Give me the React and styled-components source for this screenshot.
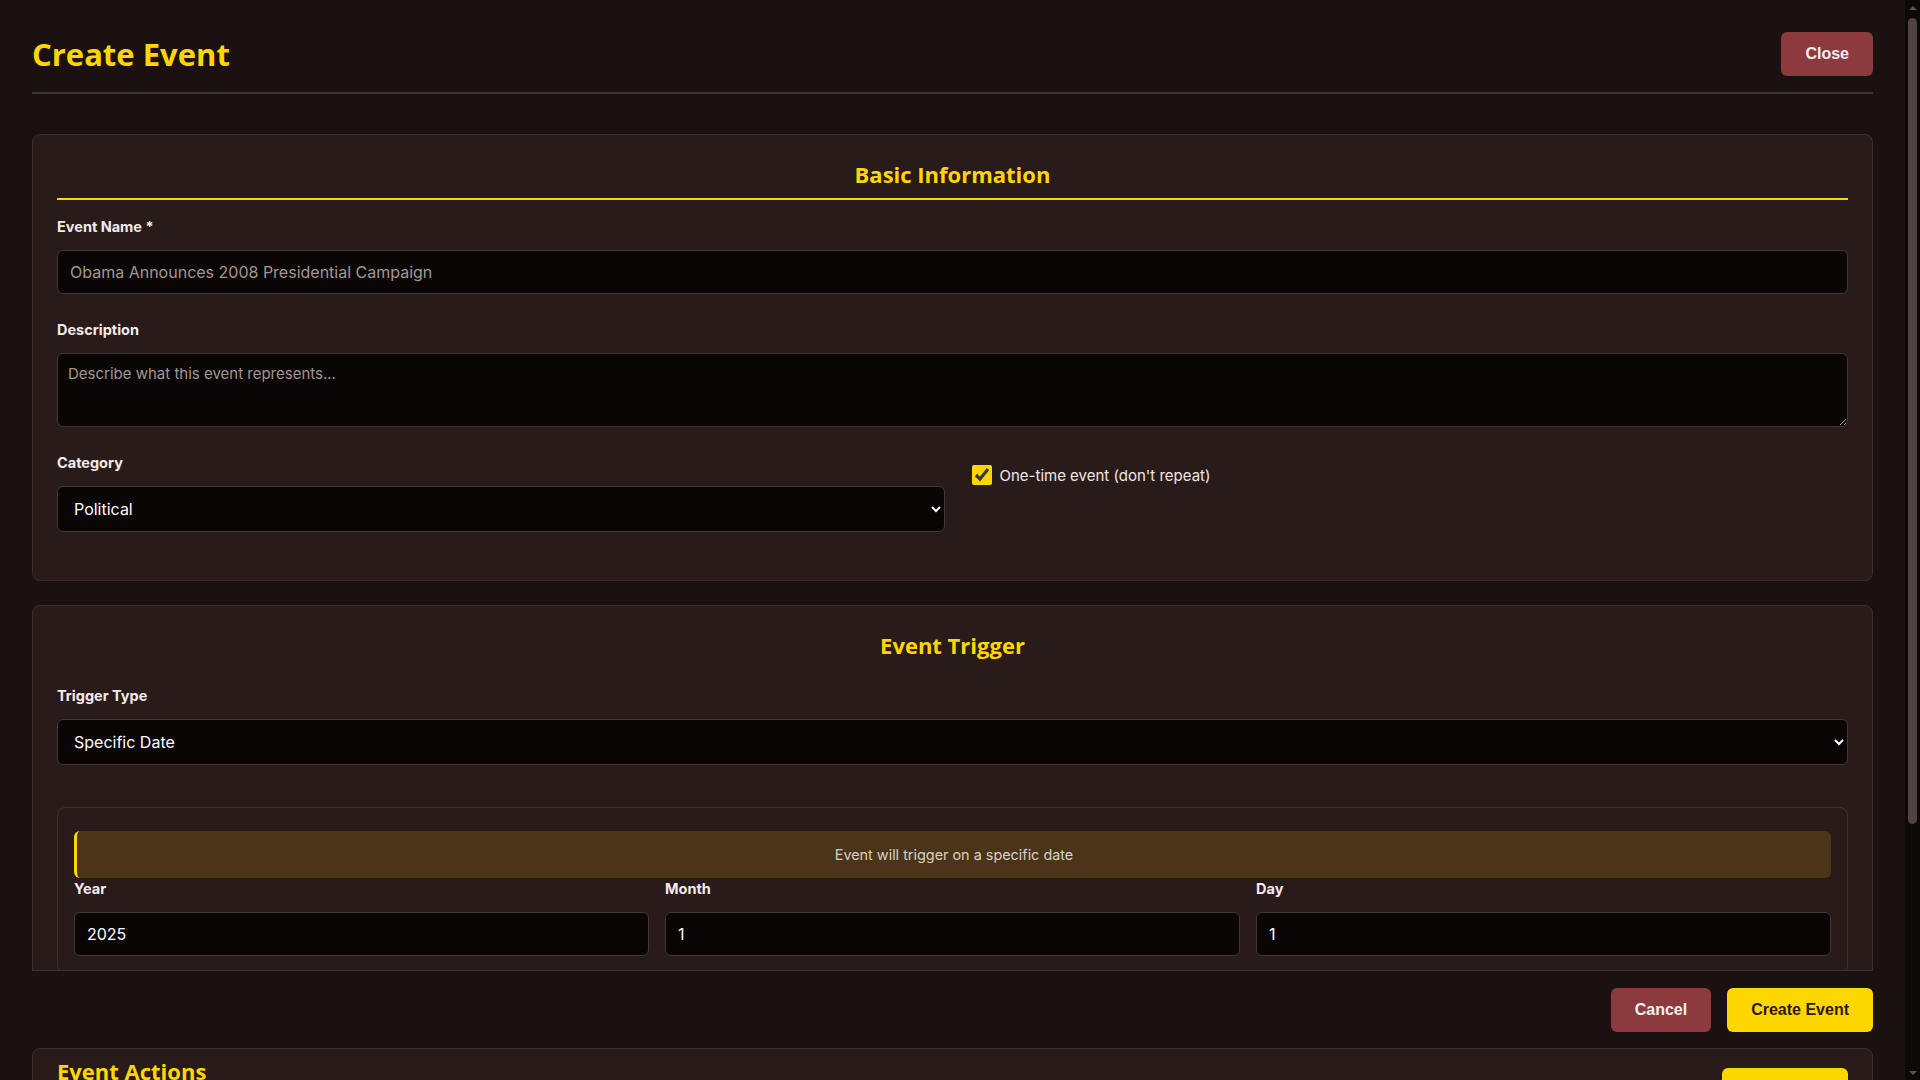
import React from "react";
import styled, { createGlobalStyle } from "styled-components";

const GlobalStyle = createGlobalStyle`
  html {
    background: #1a1110;
    color-scheme: dark;
  }
  body {
    margin: 0;
    background: #1a1110;
    color: #f0e6e6;
    font-family: Inter, "Noto Sans", sans-serif;
  }
  * { box-sizing: border-box; }
`;

const Shell = styled.div`
  display: flex;
  align-items: flex-start;
`;

const Page = styled.div`
  flex: 1;
  min-width: 0;
  padding: 32px;
`;

/* decorative page scrollbar, as in the screenshot */
const Rail = styled.div`
  position: sticky;
  top: 0;
  width: 15px;
  height: 100vh;
  flex-shrink: 0;
  background: #0d0909;
  display: flex;
  flex-direction: column;
  align-items: center;
`;

const RailArrow = styled.div`
  height: 15px;
  width: 15px;
  display: flex;
  align-items: center;
  justify-content: center;
  &::before {
    content: "";
    border-left: 4px solid transparent;
    border-right: 4px solid transparent;
    ${(p) =>
      p.$down
        ? "border-top: 4px solid #5e5151;"
        : "border-bottom: 4px solid #5e5151;"}
  }
`;

const RailTrack = styled.div`
  flex: 1;
  width: 100%;
  display: flex;
  justify-content: center;
  padding-top: 3px;
`;

const RailThumb = styled.div`
  width: 9px;
  height: 806px;
  border-radius: 5px;
  background: #4f4343;
`;

const Header = styled.header`
  display: flex;
  justify-content: space-between;
  align-items: center;
  padding-bottom: 16px;
  border-bottom: 2px solid #3f3434;
  margin-bottom: 40px;
`;

const PageTitle = styled.h1`
  margin: 0;
  font-family: "Open Sans", Lato, sans-serif;
  font-weight: 700;
  font-size: 31px;
  line-height: 40px;
  color: #ffd700;
`;

const Button = styled.button`
  height: 44px;
  padding: 0 ${(p) => p.$pad || 24}px;
  border: none;
  border-radius: 6px;
  font-family: "Liberation Sans", Arial, sans-serif;
  font-weight: 700;
  font-size: 16px;
  cursor: pointer;
  background: ${(p) => (p.$variant === "primary" ? "#ffd700" : "#8b3a3e")};
  color: ${(p) => (p.$variant === "primary" ? "#2a1a1a" : "#f6eeee")};
`;

const ScrollArea = styled.div`
  height: 836px;
  overflow: hidden;
`;

const Card = styled.section`
  background: #2a1b1b;
  border: 1px solid #3d2f2f;
  border-radius: 8px;
  padding: 25px 24px 24px;
  margin-bottom: 24px;
`;

const SectionTitle = styled.h3`
  margin: 0 0 18px;
  padding-bottom: 10px;
  text-align: center;
  font-family: "Open Sans", Lato, sans-serif;
  font-weight: 700;
  font-size: 22px;
  line-height: 28px;
  color: #ffd700;
  border-bottom: ${(p) => (p.$underline ? "2px solid #ffd700" : "none")};
`;

const FormGroup = styled.div`
  margin-bottom: ${(p) => (p.$mb !== undefined ? p.$mb : 27)}px;
`;

const Label = styled.label`
  display: block;
  font-size: 14.5px;
  line-height: 17px;
  font-weight: 700;
  color: #f3ebeb;
  margin-bottom: 15px;
`;

const TextInput = styled.input`
  display: block;
  width: 100%;
  height: 44px;
  padding: 0 12px;
  background: #0a0606;
  border: 1px solid #433636;
  border-radius: 6px;
  color: #ffffff;
  font-family: Inter, "Noto Sans", sans-serif;
  font-size: 16px;
  outline: none;
  &::placeholder { color: #a4968f; }
`;

const TextArea = styled.textarea`
  display: block;
  width: 100%;
  height: 74px;
  padding: 10px;
  background: #0a0606;
  border: 1px solid #433636;
  border-radius: 6px;
  color: #ffffff;
  font-family: Inter, "Noto Sans", sans-serif;
  font-size: 15px;
  resize: vertical;
  outline: none;
  &::placeholder { color: #a4968f; }
`;

const Select = styled.select`
  display: block;
  width: 100%;
  height: 46px;
  padding: 0 10px 0 12px;
  background: #0a0606;
  border: 1px solid #433636;
  border-radius: 6px;
  color: #ffffff;
  font-family: Inter, "Noto Sans", sans-serif;
  font-size: 16px;
  outline: none;
`;

const TwoCol = styled.div`
  display: grid;
  grid-template-columns: 1fr 1fr;
  gap: 16px;
`;

const CheckRow = styled.label`
  display: flex;
  align-items: center;
  gap: 5px;
  padding: 8px 0 0 8px;
  font-size: 15px;
  color: #f0e8e8;
`;

const Check = styled.input`
  width: 20px;
  height: 20px;
  margin: 3px;
  accent-color: #ffd700;
`;

const DateBox = styled.div`
  margin-top: 42px;
  border: 1px solid #3d2f2f;
  border-radius: 8px;
  padding: 23px 16px 16px;
`;

const Banner = styled.div`
  background: #4a3518;
  border-left: 3px solid #ffd700;
  border-radius: 6px;
  padding: 14px 16px;
  text-align: center;
  font-size: 14.4px;
  line-height: 19px;
  color: #d9cfc6;
  margin-bottom: 2px;
`;

const ThreeCol = styled.div`
  display: grid;
  grid-template-columns: repeat(3, 1fr);
  gap: 16px;
`;

const Footer = styled.div`
  display: flex;
  justify-content: flex-end;
  gap: 16px;
  border-top: 1px solid #3f3434;
  padding: 17px 0 16px;
`;

const ActionsCard = styled.section`
  background: #2a1b1b;
  border: 1px solid #3d2f2f;
  border-radius: 8px;
  padding: 8px 24px 24px;
  min-height: 320px;
`;

const ActionsHeader = styled.div`
  display: flex;
  justify-content: space-between;
  align-items: flex-start;
`;

const ActionsTitle = styled.h3`
  margin: 0;
  font-family: "Open Sans", Lato, sans-serif;
  font-weight: 700;
  font-size: 22px;
  line-height: 28px;
  color: #ffd700;
`;

const AddButton = styled(Button)`
  margin-top: 11px;
`;

const Empty = styled.p`
  margin: 40px 0 0;
  text-align: center;
  color: #a4968f;
  font-size: 14px;
`;

export default function App() {
  return (
    <>
      <GlobalStyle />
      <Shell>
        <Page>
          <Header>
            <PageTitle>Create Event</PageTitle>
            <Button>Close</Button>
          </Header>

          <ScrollArea>
            <Card>
              <SectionTitle $underline>Basic Information</SectionTitle>
              <FormGroup>
                <Label>Event Name *</Label>
                <TextInput placeholder="Obama Announces 2008 Presidential Campaign" />
              </FormGroup>
              <FormGroup>
                <Label>Description</Label>
                <TextArea placeholder="Describe what this event represents..." />
              </FormGroup>
              <TwoCol>
                <FormGroup $mb={24}>
                  <Label>Category</Label>
                  <Select defaultValue="political">
                    <option value="political">Political</option>
                    <option value="economic">Economic</option>
                    <option value="social">Social</option>
                  </Select>
                </FormGroup>
                <div>
                  <CheckRow>
                    <Check type="checkbox" defaultChecked />
                    One-time event (don't repeat)
                  </CheckRow>
                </div>
              </TwoCol>
            </Card>

            <Card>
              <SectionTitle>Event Trigger</SectionTitle>
              <FormGroup $mb={0}>
                <Label>Trigger Type</Label>
                <Select defaultValue="date">
                  <option value="date">Specific Date</option>
                  <option value="condition">Condition</option>
                </Select>
              </FormGroup>
              <DateBox>
                <Banner>Event will trigger on a specific date</Banner>
                <ThreeCol>
                  <div>
                    <Label>Year</Label>
                    <TextInput type="number" defaultValue="2025" />
                  </div>
                  <div>
                    <Label>Month</Label>
                    <TextInput type="number" defaultValue="1" />
                  </div>
                  <div>
                    <Label>Day</Label>
                    <TextInput type="number" defaultValue="1" />
                  </div>
                </ThreeCol>
              </DateBox>
            </Card>
          </ScrollArea>

          <Footer>
            <Button>Cancel</Button>
            <Button $variant="primary">Create Event</Button>
          </Footer>

          <ActionsCard>
            <ActionsHeader>
              <ActionsTitle>Event Actions</ActionsTitle>
              <AddButton $variant="primary" $pad={14}>+ Add Action</AddButton>
            </ActionsHeader>
            <Empty>No actions added yet.</Empty>
          </ActionsCard>
        </Page>

        <Rail aria-hidden="true">
          <RailArrow />
          <RailTrack>
            <RailThumb />
          </RailTrack>
          <RailArrow $down />
        </Rail>
      </Shell>
    </>
  );
}
